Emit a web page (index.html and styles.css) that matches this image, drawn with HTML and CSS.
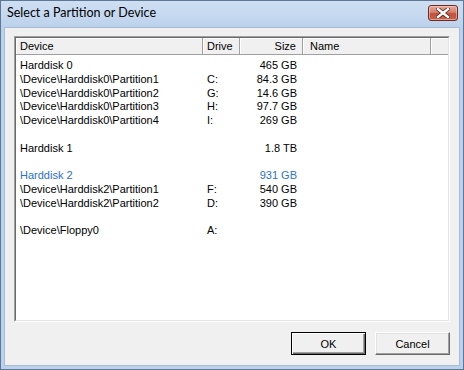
FILE: index.html
```html
<!DOCTYPE html>
<html lang="en">
<head>
  <meta charset="UTF-8" />
  <title>Select a Partition or Device</title>
  <link rel="stylesheet" href="styles.css">
</head>
<body>
  <div class="window">
    <div class="titlebar">
      <span class="title">Select a Partition or Device</span>
      <div class="close">
        <svg width="14" height="10" viewBox="0 0 14 10">
          <path d="M2 1 L12 9 M12 1 L2 9" stroke="#5a1f18" stroke-width="4" stroke-linecap="square" fill="none"/>
          <path d="M2 1 L12 9 M12 1 L2 9" stroke="#fff" stroke-width="2.4" stroke-linecap="square" fill="none"/>
        </svg>
      </div>
    </div>

    <div class="client">
      <div class="list">
        <div class="list-inner">
          <div class="row header">
            <div class="cell device">Device</div>
            <div class="cell drive">Drive</div>
            <div class="cell size">Size</div>
            <div class="cell name">Name</div>
            <div class="cell filler"></div>
          </div>
          <div class="rows">
            <div class="row"><div class="cell device">Harddisk 0</div><div class="cell drive"></div><div class="cell size">465 GB</div><div class="cell name"></div></div>
            <div class="row"><div class="cell device">\Device\Harddisk0\Partition1</div><div class="cell drive">C:</div><div class="cell size">84.3 GB</div><div class="cell name"></div></div>
            <div class="row"><div class="cell device">\Device\Harddisk0\Partition2</div><div class="cell drive">G:</div><div class="cell size">14.6 GB</div><div class="cell name"></div></div>
            <div class="row"><div class="cell device">\Device\Harddisk0\Partition3</div><div class="cell drive">H:</div><div class="cell size">97.7 GB</div><div class="cell name"></div></div>
            <div class="row"><div class="cell device">\Device\Harddisk0\Partition4</div><div class="cell drive">I:</div><div class="cell size">269 GB</div><div class="cell name"></div></div>
            <div class="row"></div>
            <div class="row"><div class="cell device">Harddisk 1</div><div class="cell drive"></div><div class="cell size">1.8 TB</div><div class="cell name"></div></div>
            <div class="row"></div>
            <div class="row highlight"><div class="cell device">Harddisk 2</div><div class="cell drive"></div><div class="cell size">931 GB</div><div class="cell name"></div></div>
            <div class="row"><div class="cell device">\Device\Harddisk2\Partition1</div><div class="cell drive">F:</div><div class="cell size">540 GB</div><div class="cell name"></div></div>
            <div class="row"><div class="cell device">\Device\Harddisk2\Partition2</div><div class="cell drive">D:</div><div class="cell size">390 GB</div><div class="cell name"></div></div>
            <div class="row"></div>
            <div class="row"><div class="cell device">\Device\Floppy0</div><div class="cell drive">A:</div><div class="cell size"></div><div class="cell name"></div></div>
          </div>
        </div>
      </div>

      <div class="buttons">
        <button class="btn default">OK</button>
        <button class="btn">Cancel</button>
      </div>
    </div>
  </div>
</body>
</html>
```

FILE: styles.css
```css
html, body {
  margin: 0;
  padding: 0;
  background: #fff;
}

.window {
  box-sizing: border-box;
  width: 464px;
  height: 370px;
  display: flex;
  flex-direction: column;
  border: 1px solid #5d7896;
  padding: 0 3px 3px;
  background: #bcd2ec;
  font-family: "Liberation Sans", Arial, sans-serif;
  font-size: 11px;
  color: #000;
}

.titlebar {
  height: 26px;
  margin: 0 -3px;
  padding: 0 5px 0 6px;
  display: flex;
  align-items: flex-start;
  justify-content: space-between;
  background: linear-gradient(#cfdff2, #bcd2ec);
}

.title {
  font-family: Lato, "Open Sans", sans-serif;
  font-size: 12.5px;
  line-height: 26px;
  margin-top: -1px;
}

.close {
  box-sizing: border-box;
  width: 30px;
  height: 16px;
  margin-top: 4px;
  display: flex;
  align-items: center;
  justify-content: center;
  border: 1px solid #6b2c24;
  border-radius: 3px;
  background: linear-gradient(#e7a898, #d4806e 45%, #c0503a 55%, #c9644c);
  box-shadow: inset 0 0 0 1px rgba(255, 220, 210, 0.5);
}

.client {
  flex: 1;
  display: flex;
  flex-direction: column;
  padding: 8px 9px 10px;
  background: #f0f0f0;
  border: 1px solid #a7bcd4;
}

.list {
  flex: 1;
  display: flex;
  border: 1px solid;
  border-color: #a0a0a0 #fff #fff #a0a0a0;
}

.list-inner {
  flex: 1;
  border: 1px solid;
  border-color: #696969 #e3e3e3 #e3e3e3 #696969;
  background: #fff;
  overflow: hidden;
}

.row {
  display: flex;
  height: 13.75px;
  line-height: 14px;
  white-space: nowrap;
}

.row.highlight {
  color: #2a72cc;
}

.cell {
  box-sizing: border-box;
  flex: none;
}

.device { width: 187px; padding-left: 4px; }
.drive { width: 37px; padding-left: 4px; }
.size { width: 63px; padding-right: 6px; text-align: right; }
.name { width: 128px; padding-left: 7px; }
.filler { flex: 1; }

.header {
  height: 17px;
  line-height: 16px;
  background: #f0f0f0;
}

.header .cell {
  border-right: 1px solid #a0a0a0;
  border-bottom: 1px solid #a0a0a0;
  box-shadow: inset 1px 1px #fff;
}

.header .filler {
  border-right: none;
}

.rows {
  padding-top: 3px;
}

.buttons {
  display: flex;
  justify-content: flex-end;
  gap: 9px;
  margin-top: 10px;
}

.btn {
  box-sizing: border-box;
  width: 75px;
  height: 23px;
  padding: 0;
  font-family: "Liberation Sans", Arial, sans-serif;
  font-size: 11px;
  color: #000;
  background: #f0f0f0;
  border: 1px solid;
  border-color: #fff #696969 #696969 #fff;
  box-shadow: inset -1px -1px #a0a0a0, inset 1px 1px #e3e3e3;
}

.btn.default {
  border: 1px solid #000;
  box-shadow: inset 1px 1px #fff, inset -1px -1px #696969, inset -2px -2px #a0a0a0;
}
```
